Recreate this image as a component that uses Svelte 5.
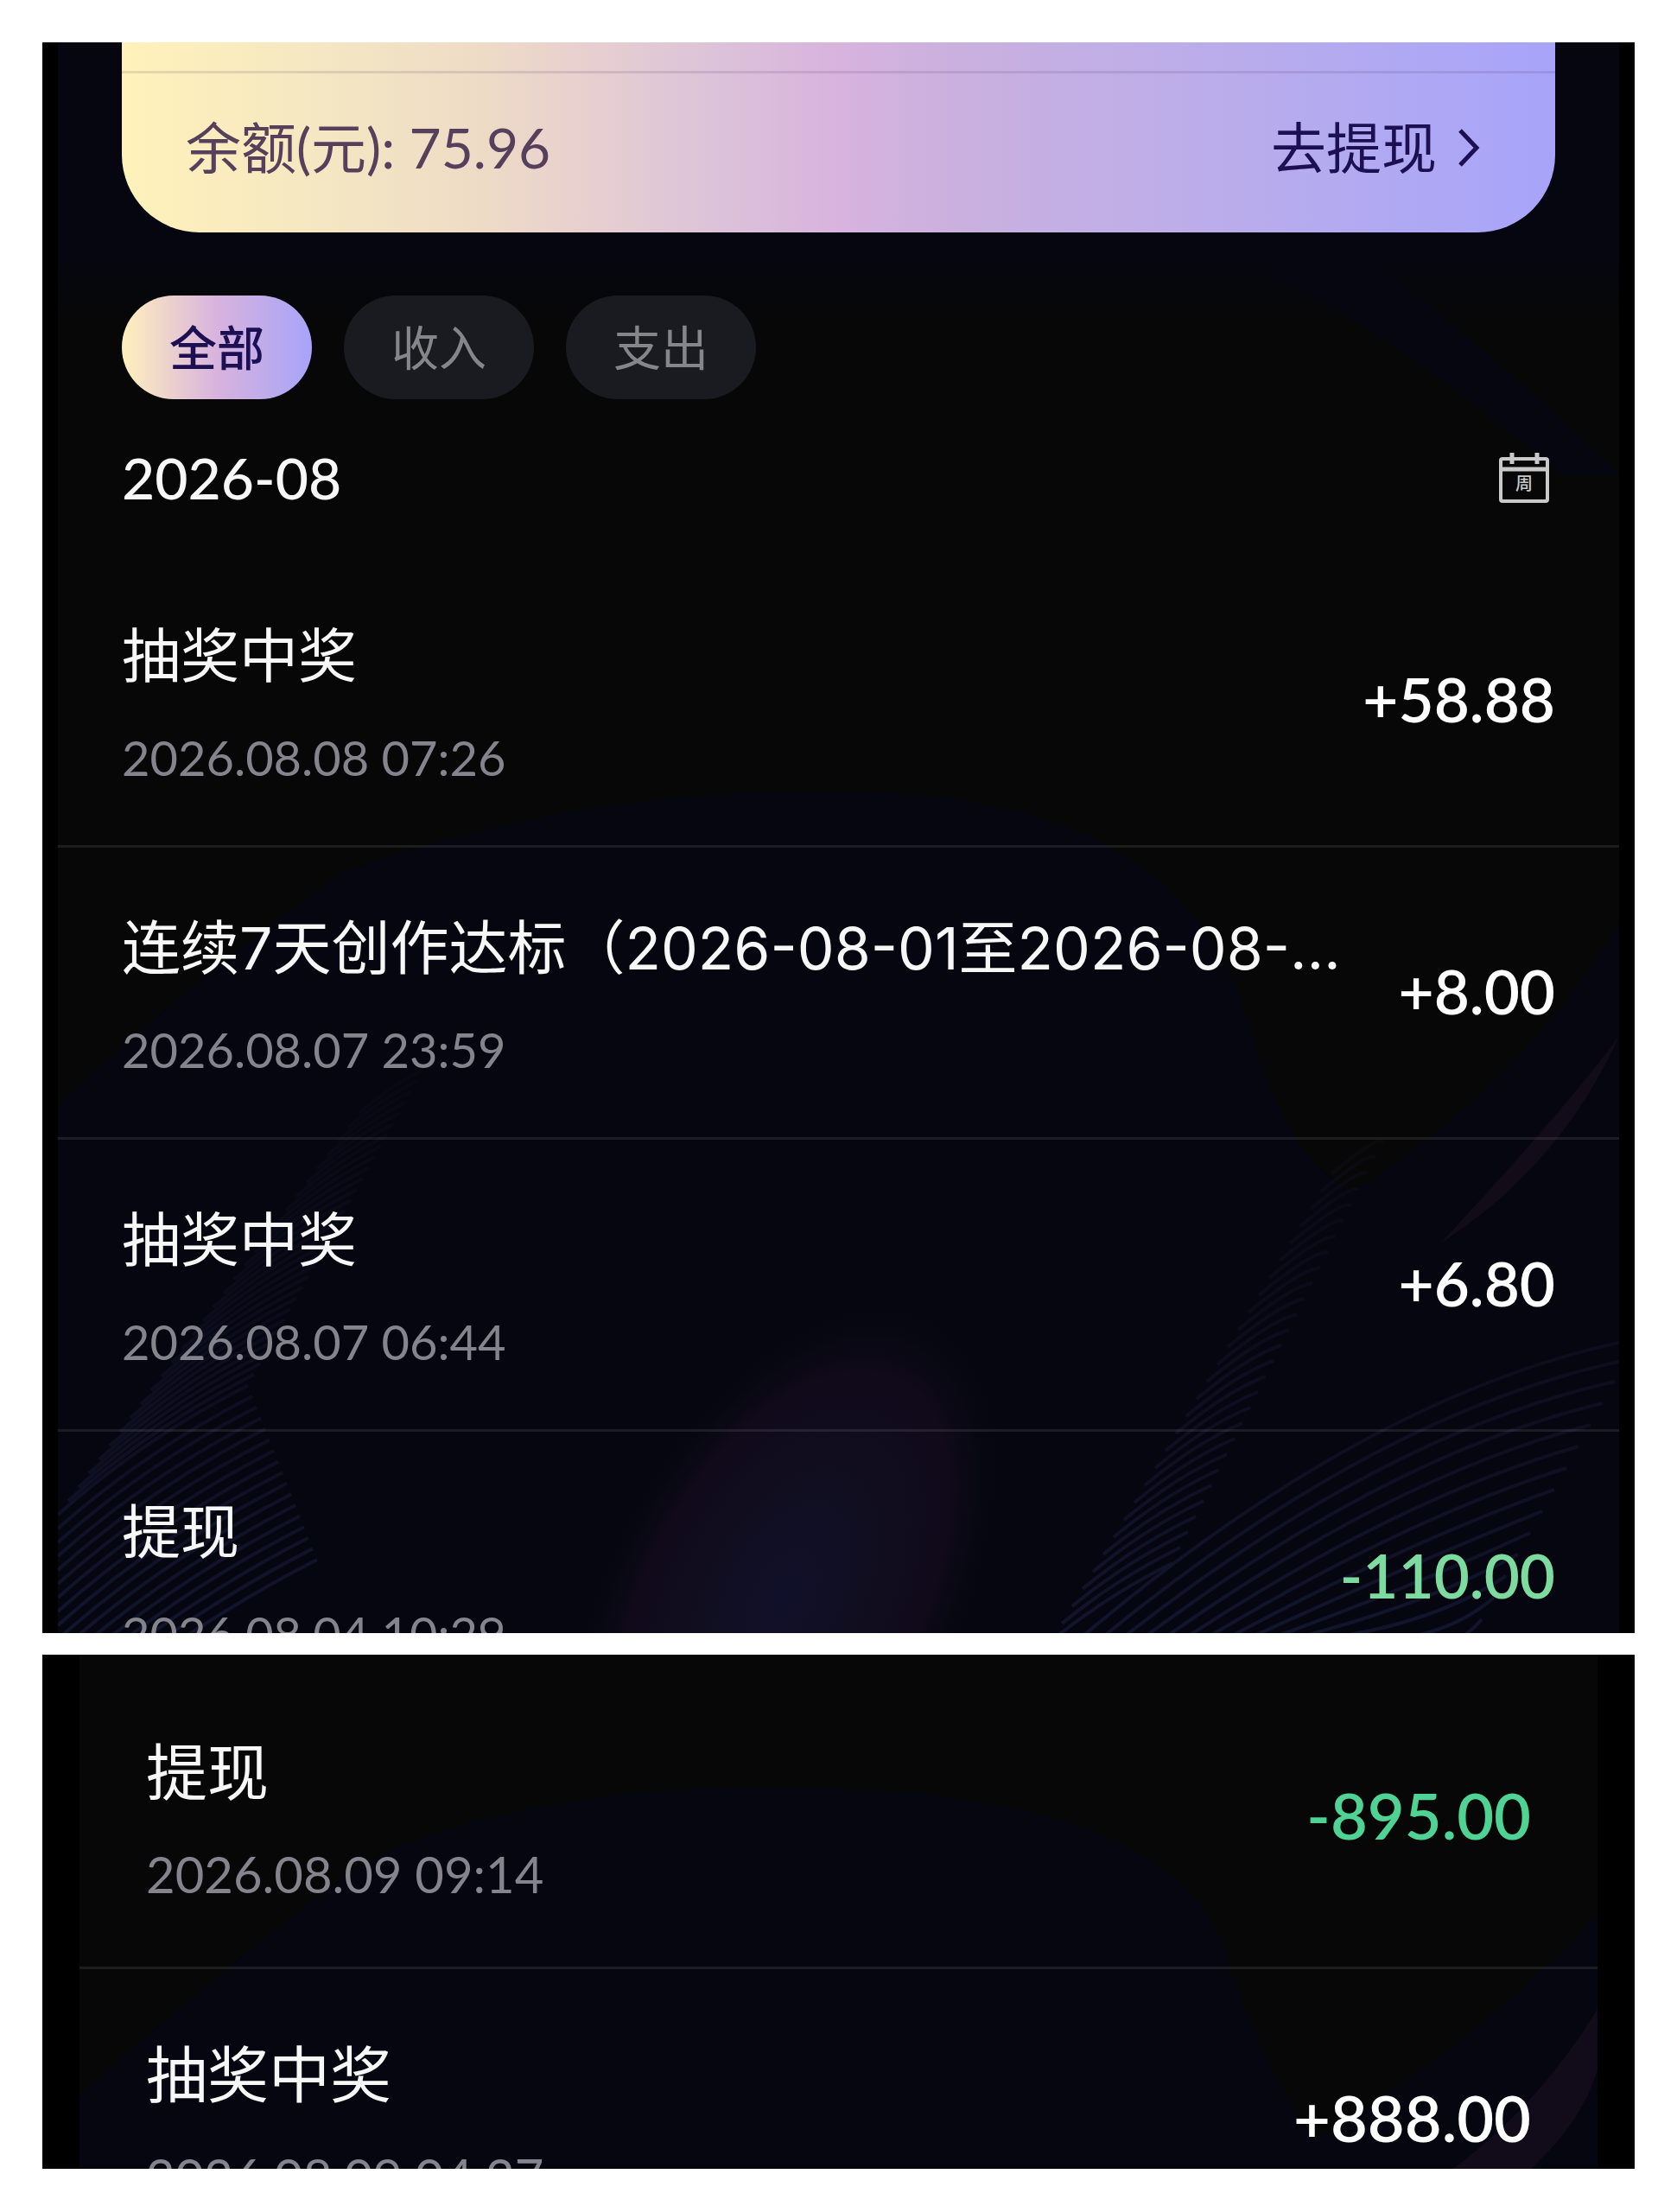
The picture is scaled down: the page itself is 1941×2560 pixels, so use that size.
<script>
  const tabs = ['全部', '收入', '支出'];
  let active = $state('全部');

  const august = [
    { title: '抽奖中奖', time: '2026.08.08 07:26', amount: '+58.88' },
    { title: '连续7天创作达标（2026-08-01至2026-08-…', time: '2026.08.07 23:59', amount: '+8.00' },
    { title: '抽奖中奖', time: '2026.08.07 06:44', amount: '+6.80' },
    { title: '提现', time: '2026.08.04 10:29', amount: '-110.00' },
  ];
  const latest = [
    { title: '提现', time: '2026.08.09 09:14', amount: '-895.00' },
    { title: '抽奖中奖', time: '2026.08.09 04:27', amount: '+888.00' },
  ];

  // thin wave lines of the backdrop
  const leftWaves = Array.from({ length: 46 }, (_, i) => {
    const y = 1960 - i * 16;
    const x = Math.max(0, (i - 16) * 12);
    const len = 300 - i * 5;
    return `M${x} ${y} Q${x + len * 0.45} ${y - len * 0.4} ${x + len} ${y - len * 0.68}`;
  });
  const rightWaves = Array.from({ length: 16 }, (_, i) => {
    const x = 1180 + i * 24;
    const y = 1500 + i * 25;
    return `M${x} 1850 Q${1520 + i * 6} ${y + 60} ${1830 - i * 14} ${y}`;
  });
  const midWaves = Array.from({ length: 28 }, (_, i) => {
    const x = 1150 + i * 12;
    const y = 1850 - i * 20;
    return `M${x} ${y} Q${x + 60} ${y - 50} ${x + 140 - i * 3} ${y - 90 + i * 2}`;
  });
</script>

{#snippet rows(items)}
  <ul class="list">
    {#each items as item}
      <li class="row">
        <div class="info">
          <p class="title">{item.title}</p>
          <time class="time">{item.time}</time>
        </div>
        <span class="amount" class:out={item.amount.startsWith('-')}>{item.amount}</span>
      </li>
    {/each}
  </ul>
{/snippet}

<main class="page">
  <section class="panel wallet">
    <div class="screen">
      <svg class="backdrop" viewBox="0 0 1807 1841" preserveAspectRatio="none" aria-hidden="true">
        <defs>
          <linearGradient id="top" x1="0" y1="0" x2="0" y2="1">
            <stop offset="0.75" stop-color="#05060f" />
            <stop offset="1" stop-color="#05060f" stop-opacity="0" />
          </linearGradient>
          <radialGradient id="glow">
            <stop offset="0" stop-color="#10102a" />
            <stop offset="0.4" stop-color="#110e20" />
            <stop offset="0.75" stop-color="#100a1a" />
            <stop offset="1" stop-color="#060912" stop-opacity="0" />
          </radialGradient>
          <linearGradient id="fade" gradientUnits="userSpaceOnUse" x1="0" y1="1200" x2="0" y2="1841">
            <stop offset="0" stop-color="#101122" stop-opacity="0.2" />
            <stop offset="1" stop-color="#14162f" stop-opacity="0.9" />
          </linearGradient>
        </defs>
        <rect width="1807" height="330" fill="url(#top)" />
        <path d="M1280 220 L1480 220 Q1640 340 1807 500 L1740 500 Q1540 330 1400 270Z" fill="#05060f" />
        <path d="M0 1230 Q150 1090 330 960 Q640 850 980 870 Q1290 890 1370 1110 Q1420 1300 1500 1330 Q1700 1200 1807 1020 V1841 H0Z" fill="#05060f" />
        <path d="M1807 1150 Q1740 1300 1600 1390 Q1740 1240 1807 1150Z" fill="#120b19" />
        <ellipse cx="840" cy="1800" rx="210" ry="380" transform="rotate(28 840 1800)" fill="url(#glow)" />
        <g fill="none" stroke="url(#fade)" stroke-width="4">
          {#each [...leftWaves, ...midWaves, ...rightWaves] as d}
            <path {d} />
          {/each}
        </g>
      </svg>

      <div class="card">
        <div class="card-top"></div>
        <div class="balance">
          <span>余额(元): 75.96</span>
          <button class="withdraw">
            去提现
            <svg class="chevron" viewBox="0 0 26 46" aria-hidden="true">
              <path d="M3 3 L22 23 L3 43" fill="none" stroke="currentColor" stroke-width="5" />
            </svg>
          </button>
        </div>
      </div>

      <nav class="tabs">
        {#each tabs as tab}
          <button class="tab" class:active={active === tab} onclick={() => (active = tab)}>{tab}</button>
        {/each}
      </nav>

      <div class="month">
        <h2>2026-08</h2>
        <button class="calendar" aria-label="周">
          <svg viewBox="0 0 60 60" aria-hidden="true">
            <g fill="none" stroke="#c9c9c9" stroke-width="4">
              <rect x="3" y="8" width="54" height="49" rx="2" />
              <path d="M3 20 H57" stroke-width="5" />
              <path d="M16 1 V14 M45 1 V14" stroke-width="5" />
            </g>
            <text x="30" y="44" text-anchor="middle" font-size="20" font-weight="500" fill="#c9c9c9">周</text>
          </svg>
        </button>
      </div>

      {@render rows(august)}
    </div>
  </section>

  <section class="panel recent">
    <div class="screen">
      <svg class="backdrop" viewBox="0 0 1757 595" preserveAspectRatio="none" aria-hidden="true">
        <path d="M0 510 Q180 350 330 240 Q560 130 960 160 Q1290 190 1330 360 Q1380 500 1430 560 Q1620 450 1757 300 V595 H0Z" fill="#05060f" />
        <path d="M1757 410 Q1690 520 1590 595 H1680 Q1740 540 1757 480Z" fill="#120b19" />
      </svg>
      {@render rows(latest)}
    </div>
  </section>
</main>

<style>
  :global(body) {
    margin: 0;
    background: #fff;
  }
  .page {
    display: flex;
    flex-direction: column;
    gap: 25px;
    padding: 49px 49px 50px;
    font-family: Lato, "Noto Sans CJK SC", sans-serif;
    color: #f7f7f7;
  }
  button {
    border: 0;
    padding: 0;
    background: none;
    color: inherit;
    font: inherit;
    cursor: pointer;
  }
  .panel {
    background: #000;
    overflow: hidden;
  }
  .screen {
    position: relative;
    min-height: 100%;
    background: #070707;
  }
  .backdrop {
    position: absolute;
    top: 0;
    left: 0;
    width: 100%;
  }
  .card,
  .tabs,
  .month,
  .list {
    position: relative;
  }

  /* the panels show a cut of a longer list */
  .wallet {
    height: 1841px;
    padding: 0 18px;
    --side: 74px;
    --title: 68px;
    --time: 56px;
    --amount: 71px;
    --gap: 32px;
    --row: 338px;
    --green: #7ddba0;
  }
  .recent {
    height: 595px;
    padding: 0 43px;
    --side: 77px;
    --title: 71px;
    --time: 58px;
    --amount: 74px;
    --gap: 32px;
    --row: 350px;
    --green: #4fd394;
  }
  .recent .list {
    padding-top: 14px;
  }
  .wallet .backdrop {
    height: 1841px;
  }
  .recent .backdrop {
    height: 595px;
  }

  .card {
    margin: 0 74px;
    border-radius: 0 0 90px 90px;
    background: linear-gradient(90deg, #fff2ba 0%, #f3e5c3 16%, #eedbc6 25%, #e8d0cf 32%, #dcc3d8 41%, #d8b3de 50%, #cab0de 58%, #c0aee6 70%, #b3aaf0 85%, #a7a4f9 100%);
    color: #56405c;
    font-size: 64px;
    line-height: 96px;
  }
  .card-top {
    height: 33px;
    border-bottom: 3px solid rgba(80, 50, 100, 0.14);
  }
  .balance {
    display: flex;
    justify-content: space-between;
    align-items: center;
    padding: 38px 87px 50px 74px;
  }
  .withdraw {
    display: flex;
    align-items: center;
    gap: 24px;
    color: #1c0f52;
  }
  .chevron {
    width: 26px;
    height: 46px;
  }

  .tabs {
    display: flex;
    gap: 37px;
    margin: 73px 74px 0;
  }
  .tab {
    width: 220px;
    height: 120px;
    border-radius: 60px;
    background: #1a1b20;
    color: #85868a;
    font-size: 55px;
    line-height: 80px;
  }
  .tab.active {
    background: linear-gradient(90deg, #fff0bd, #d8b3de 50%, #a7a4f9);
    color: #1c0f52;
    font-weight: 500;
  }

  .month {
    display: flex;
    justify-content: space-between;
    align-items: center;
    margin: 43px 80px 42px 74px;
  }
  .month h2 {
    margin: 0;
    font-size: 66px;
    font-weight: 500;
    line-height: 96px;
  }
  .calendar {
    width: 60px;
    height: 60px;
  }
  .calendar svg {
    display: block;
  }

  .list {
    margin: 0;
    padding: 0;
    list-style: none;
  }
  .row {
    display: flex;
    justify-content: space-between;
    align-items: center;
    box-sizing: border-box;
    height: var(--row);
    padding: 0 var(--side);
    border-bottom: 3px solid rgba(255, 255, 255, 0.09);
  }
  .info {
    padding-top: 5px;
  }
  .title {
    margin: 0 0 var(--gap);
    font-family: Inter, "Noto Sans CJK SC", sans-serif;
    font-size: var(--title);
    font-weight: 400;
    line-height: 96px;
    white-space: nowrap;
  }
  .time {
    display: block;
    color: #85838c;
    font-size: var(--time);
    line-height: 76px;
  }
  .amount {
    padding-bottom: 4px;
    color: #fff;
    font-size: var(--amount);
    font-weight: 600;
    line-height: 96px;
  }
  .amount.out {
    color: var(--green);
  }
</style>
